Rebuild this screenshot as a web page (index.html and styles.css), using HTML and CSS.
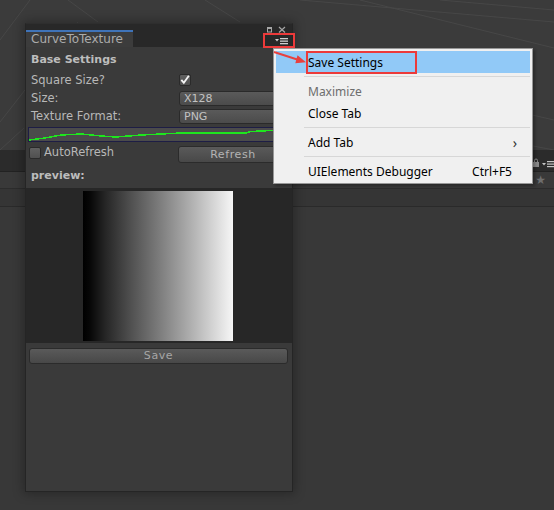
FILE: index.html
```html
<!DOCTYPE html>
<html>
<head>
<meta charset="utf-8">
<link rel="stylesheet" href="styles.css">
</head>
<body>
<div class="editor">
  <div class="scene">
    <svg class="grid" width="554" height="150" viewBox="0 0 554 150">
      <g stroke="#474747" stroke-width="1" fill="none">
        <line x1="0" y1="122" x2="78" y2="22"/>
        <line x1="0" y1="40" x2="30" y2="0"/>
        <line x1="68" y1="0" x2="98" y2="22"/>
        <line x1="205" y1="0" x2="240" y2="22"/>
        <line x1="300" y1="0" x2="554" y2="22"/>
        <line x1="360" y1="0" x2="554" y2="48"/>
        <line x1="440" y1="0" x2="554" y2="10"/>
        <line x1="293" y1="60" x2="554" y2="120"/>
        <line x1="293" y1="100" x2="554" y2="150"/>
        <line x1="0" y1="150" x2="24" y2="128"/>
      </g>
    </svg>
  </div>
  <div class="toolbar">
    <svg class="tb-icons" width="22" height="10" viewBox="0 0 22 10">
      <rect x="1" y="4" width="6" height="5" fill="#8a8a8a"/>
      <path d="M2.5 4 V2.5 a1.5 1.5 0 0 1 3 0 V4" stroke="#8a8a8a" fill="none"/>
      <polygon points="10,5 14,5 12,7.5" fill="#c4c4c4"/>
      <rect x="15" y="3" width="7" height="1.2" fill="#c4c4c4"/>
      <rect x="15" y="5.5" width="7" height="1.2" fill="#c4c4c4"/>
      <rect x="15" y="8" width="7" height="1.2" fill="#c4c4c4"/>
    </svg>
  </div>
  <div class="subbar"><span class="star">★</span></div>
  <div class="band"></div>
  <div class="rest"></div>
</div>

<div class="window">
  <div class="titlebar">
    <div class="tab">CurveToTexture</div>
    <svg class="win-icons" width="26" height="22" viewBox="0 0 26 22">
      <rect x="2.5" y="3.5" width="4" height="3.5" stroke="#a6a6a6" fill="none"/>
      <rect x="2" y="2" width="5" height="2" fill="#a6a6a6"/>
      <path d="M14 2 L20 7.5 M20 2 L14 7.5" stroke="#a6a6a6" stroke-width="1.2"/>
      <polygon points="10,14 14,14 12,16.5" fill="#cfcfcf"/>
      <rect x="15" y="13" width="8" height="1.3" fill="#cfcfcf"/>
      <rect x="15" y="15.5" width="8" height="1.3" fill="#cfcfcf"/>
      <rect x="15" y="18" width="8" height="1.3" fill="#cfcfcf"/>
    </svg>
  </div>
  <div class="settings">
    <div class="heading">Base Settings</div>
    <div class="row">
      <span class="label">Square Size?</span>
      <span class="checkbox">
        <svg width="12" height="12" viewBox="0 0 12 12"><path d="M1.6 5.8 L4.6 9.4 L10.6 1" stroke="#f4f4f4" stroke-width="2.2" fill="none"/></svg>
      </span>
    </div>
    <div class="row">
      <span class="label">Size:</span>
      <span class="dropdown">X128</span>
    </div>
    <div class="row">
      <span class="label">Texture Format:</span>
      <span class="dropdown">PNG</span>
    </div>
    <div class="curve">
      <svg width="264" height="13" viewBox="0 0 264 13" preserveAspectRatio="none">
        <polyline points="0,12 16,10 32,7 52,6 72,8 87,9 112,7 152,5 217,5 222,3.5 242,2.5 264,1" stroke="#1ee61e" stroke-width="1.5" fill="none"/>
      </svg>
    </div>
    <div class="refresh-row">
      <span class="checkbox unchecked"></span>
      <span class="label auto">AutoRefresh</span>
      <span class="button refresh">Refresh</span>
    </div>
    <div class="heading preview-label">preview:</div>
  </div>
  <div class="preview">
    <div class="texture"></div>
  </div>
  <div class="footer">
    <span class="button save">Save</span>
  </div>
</div>

<div class="menu">
  <div class="item active">Save Settings</div>
  <div class="sep"></div>
  <div class="item disabled">Maximize</div>
  <div class="item">Close Tab</div>
  <div class="sep"></div>
  <div class="item">Add Tab<span class="chev">›</span></div>
  <div class="sep"></div>
  <div class="item">UIElements Debugger<span class="shortcut">Ctrl+F5</span></div>
</div>

<svg class="arrow" width="40" height="20" viewBox="0 0 40 20">
  <line x1="1" y1="2" x2="25" y2="9.8" stroke="#e8403f" stroke-width="2"/>
  <polygon points="33,12.2 22.3,13.3 24.5,5.3" fill="#e8403f"/>
</svg>
<div class="callout callout-icon"></div>
<div class="callout callout-item"></div>
</body>
</html>
```

FILE: styles.css
```css
html, body {
  margin: 0;
  padding: 0;
}
body {
  width: 554px;
  height: 510px;
  overflow: hidden;
  background: #383838;
  font-family: "DejaVu Sans", Verdana, sans-serif;
  font-size: 11.5px;
  position: relative;
}

/* background editor */
.editor {
  display: flex;
  flex-direction: column;
  height: 510px;
}
.scene {
  height: 150px;
  background: #3b3b3b;
}
.grid {
  display: block;
}
.toolbar {
  height: 21px;
  background: #2b2b2b;
  border-bottom: 1px solid #222;
  display: flex;
  justify-content: flex-end;
  align-items: center;
}
.tb-icons {
  margin-top: 4px;
}
.subbar {
  height: 16px;
  background: #393939;
  border-bottom: 1px solid #2c2c2c;
  display: flex;
  justify-content: flex-end;
  align-items: center;
  padding-right: 8px;
}
.star {
  color: #6e6e6e;
  font-size: 12px;
  line-height: 12px;
}
.band {
  height: 17px;
  background: #353535;
  border-bottom: 1px solid #2a2a2a;
}
.rest {
  flex: 1;
  background: #383838;
}

/* floating window */
.window {
  position: absolute;
  left: 25px;
  top: 23px;
  width: 268px;
  height: 469px;
  box-sizing: border-box;
  border: 1px solid #252525;
  border-top-color: #2e2e2e;
  background: #3a3a3a;
  display: flex;
  flex-direction: column;
  box-shadow: 0 0 10px 2px rgba(0, 0, 0, 0.28);
}
.titlebar {
  height: 23px;
  background: #282828;
  display: flex;
  align-items: flex-start;
}
.tab {
  margin-top: 6px;
  width: 107px;
  height: 17px;
  box-sizing: border-box;
  border-top: 2px solid #3f73b8;
  background: #3c3c3c;
  color: #ababab;
  font-size: 12px;
  line-height: 15px;
  padding-left: 5px;
  white-space: nowrap;
}
.win-icons {
  margin-left: auto;
  margin-top: 1px;
  margin-right: 1px;
}

.settings {
  height: 141px;
  box-sizing: border-box;
  padding: 4px 4px 0 5px;
  display: flex;
  flex-direction: column;
  color: #b8b8b8;
}
.heading {
  height: 18px;
  line-height: 18px;
  font-size: 11px;
  font-weight: bold;
  color: #bdbdbd;
  margin-bottom: 2px;
}
.row {
  height: 18px;
  display: flex;
  align-items: center;
}
.label {
  width: 148px;
  white-space: nowrap;
}
.checkbox {
  width: 12px;
  height: 12px;
  box-sizing: border-box;
  border: 1px solid #2a2a2a;
  border-radius: 2px;
  background: linear-gradient(#616161, #505050);
  display: flex;
  align-items: center;
  justify-content: center;
}
.checkbox svg {
  display: block;
}
.dropdown {
  flex: 1;
  height: 15px;
  box-sizing: border-box;
  border: 1px solid #2a2a2a;
  border-radius: 3px;
  background: linear-gradient(#5a5a5a, #4b4b4b);
  color: #c2c2c2;
  font-size: 11px;
  padding-left: 4px;
  line-height: 13px;
}
.curve {
  margin: 2px 0 0 -3px;
  height: 15px;
  box-sizing: border-box;
  border-top: 1px solid #1d1d45;
  border-bottom: 1px solid #1d1d45;
  border-left: 1px solid #1d1d45;
  background: #4b4b4b;
}
.curve svg {
  display: block;
  shape-rendering: crispEdges;
}
.refresh-row {
  margin-top: 4px;
  height: 17px;
  display: flex;
  align-items: flex-start;
  margin-left: -2px;
}
.checkbox.unchecked {
  margin-top: 1px;
}
.label.auto {
  width: auto;
  margin-left: 3px;
  line-height: 12px;
  flex: 1;
}
.button {
  height: 17px;
  box-sizing: border-box;
  border: 1px solid #2b2b2b;
  border-radius: 3px;
  background: linear-gradient(#5a5a5a, #484848);
  color: #b4b4b4;
  font-size: 11px;
  text-align: center;
  line-height: 15px;
  letter-spacing: 0.6px;
}
.refresh {
  width: 110px;
}
.preview-label {
  margin-top: 4px;
}

.preview {
  height: 155px;
  background: #272727;
  display: flex;
  justify-content: center;
  padding-top: 3px;
  box-sizing: border-box;
}
.texture {
  width: 150px;
  height: 150px;
  margin-left: -2px;
  background: linear-gradient(to right, #000 0%, #080808 5%, #262626 15%, #505050 32%, #7a7a7a 50%, #a3a3a3 67%, #cbcbcb 83%, #f6f6f6 100%);
}
.footer {
  flex: 1;
  padding: 5px 4px 0 3px;
  background: #3a3a3a;
}
.save {
  display: block;
  height: 16px;
  line-height: 14px;
  color: #a6a6a6;
}

/* context menu */
.menu {
  position: absolute;
  left: 273px;
  top: 48px;
  width: 260px;
  height: 136px;
  box-sizing: border-box;
  border: 1px solid #979797;
  background: #f0f0f0;
  padding: 2px 2px 1px 2px;
  box-shadow: 2px 2px 3px rgba(0, 0, 0, 0.3);
  font-family: "Noto Sans", "Open Sans", sans-serif;
  font-size: 12px;
  color: #000;
}
.item {
  height: 22px;
  display: flex;
  align-items: center;
  padding-left: 32px;
  padding-right: 18px;
  white-space: nowrap;
}
.item.active {
  background: #91c9f7;
}
.item.disabled {
  color: #6d6d6d;
}
.chev {
  margin-left: auto;
  margin-right: -5px;
  font-size: 14px;
  color: #333;
}
.shortcut {
  margin-left: auto;
}
.sep {
  height: 7px;
  margin-left: 28px;
  display: flex;
  align-items: center;
}
.sep::before {
  content: "";
  display: block;
  width: 100%;
  height: 1px;
  background: #d7d7d7;
}

/* annotations */
.arrow {
  position: absolute;
  left: 273px;
  top: 50px;
}
.callout {
  position: absolute;
  box-sizing: border-box;
  border: 2px solid #ec3a3a;
}
.callout-icon {
  left: 263px;
  top: 33px;
  width: 32px;
  height: 15px;
}
.callout-item {
  left: 306px;
  top: 51px;
  width: 111px;
  height: 23px;
}
```
